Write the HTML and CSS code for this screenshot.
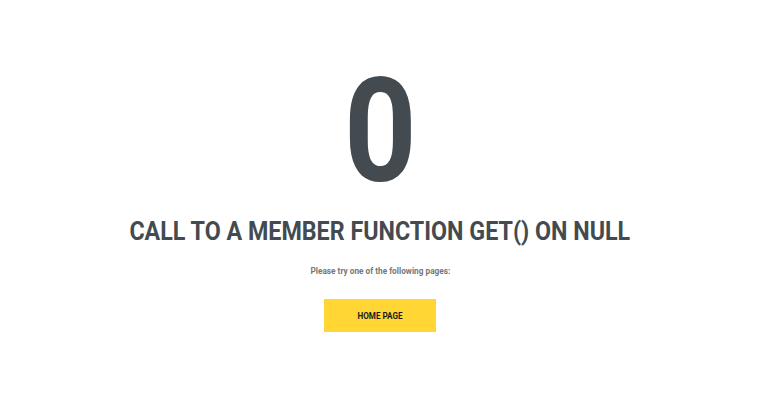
FILE: index.html
```html
<!DOCTYPE html>
<html>
<head>
<meta charset="utf-8">
<link rel="stylesheet" href="styles.css">
</head>
<body>
<main class="error-page">
  <div class="code">0</div>
  <h1 class="message">CALL TO A MEMBER FUNCTION GET() ON NULL</h1>
  <p class="hint">Please try one of the following pages:</p>
  <a class="btn" href="#"><span class="btn-label">HOME PAGE</span></a>
</main>
</body>
</html>
```
FILE: styles.css
```css
html, body {
  margin: 0;
  padding: 0;
  background: #ffffff;
}
body {
  font-family: Roboto, "Liberation Sans", sans-serif;
  width: 760px;
  height: 419px;
  overflow: hidden;
}
.error-page {
  display: flex;
  flex-direction: column;
  align-items: center;
  padding-top: 52px;
}
.code {
  font-size: 144px;
  font-weight: 700;
  line-height: 160px;
  color: #434a50;
  transform: scaleX(0.88);
}
.message {
  margin: 3px 0 0;
  font-size: 26px;
  font-weight: 700;
  line-height: 32px;
  color: #434a50;
  white-space: nowrap;
  transform: scaleX(0.895);
}
.hint {
  margin: 17px 0 0;
  font-size: 9.5px;
  font-weight: 700;
  line-height: 14px;
  color: #777777;
  white-space: nowrap;
  transform: scaleX(0.87);
}
.btn {
  margin-top: 21px;
  width: 112px;
  height: 33px;
  display: flex;
  align-items: center;
  justify-content: center;
  background: #ffd633;
  color: #1b1b1b;
  font-size: 9px;
  font-weight: 700;
  text-decoration: none;
}
.btn-label {
  display: inline-block;
  transform: scaleX(0.9);
}
```
